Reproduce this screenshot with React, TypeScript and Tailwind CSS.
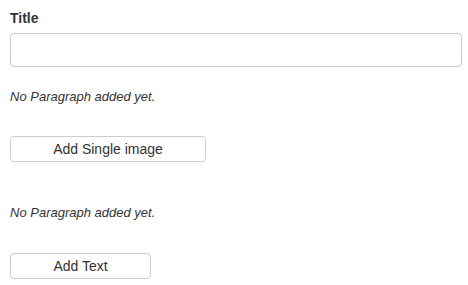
export default function App() {
    return (
        <div className="w-[468px] h-[285px] bg-white px-[10px] pt-[8px] font-['Liberation_Sans',Arial,sans-serif] text-[#333]">
            <label className="block text-[14px] font-bold leading-[20px]">Title</label>
            <input
                type="text"
                className="mt-[5px] block w-[452px] h-[34px] rounded-[4px] border border-[#ccc] bg-white px-3 outline-none"
            />

            <p className="mt-[21px] text-[13px] italic leading-[18px]">No Paragraph added yet.</p>
            <button className="mt-[30px] block w-[196px] h-[26px] rounded-[4px] border border-[#ccc] bg-white text-[14px] leading-none">
                Add Single image
            </button>

            <p className="mt-[42px] text-[13px] italic leading-[18px]">No Paragraph added yet.</p>
            <button className="mt-[31px] block w-[141px] h-[26px] rounded-[4px] border border-[#ccc] bg-white text-[14px] leading-none">
                Add Text
            </button>
        </div>
    )
}
